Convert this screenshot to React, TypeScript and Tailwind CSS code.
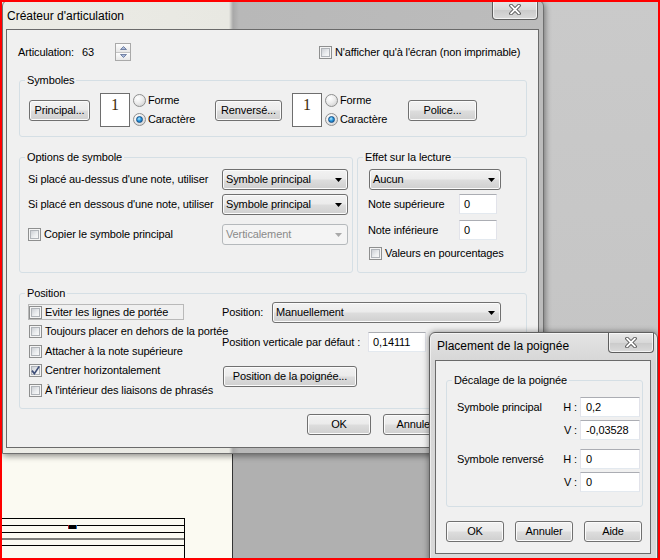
import React from "react";

type C = { className?: string; children?: React.ReactNode };

const BTN =
  "flex flex-none items-center justify-center rounded-[3px] border border-[#707070] bg-[linear-gradient(to_bottom,#f2f2f2_0%,#ebebeb_48%,#dddddd_52%,#cfcfcf_100%)] shadow-[inset_0_0_0_1px_#fbfbfb] whitespace-nowrap";

function Button({ className = "", children }: C) {
  return <div className={`${BTN} ${className}`}>{children}</div>;
}

function Select({ className = "", children, disabled }: C & { disabled?: boolean }) {
  return (
    <div
      className={`flex h-[21px] flex-none items-center rounded-[3px] border pl-[3px] pr-[5px] whitespace-nowrap ${
        disabled
          ? "border-[#b5b9bc] bg-[#f4f4f4] text-[#8a8a8a]"
          : "border-[#707070] bg-[linear-gradient(to_bottom,#f2f2f2_0%,#ebebeb_48%,#dddddd_52%,#cfcfcf_100%)] shadow-[inset_0_0_0_1px_#fbfbfb]"
      } ${className}`}
    >
      <span className="flex-1">{children}</span>
      <svg width="7" height="4" viewBox="0 0 7 4">
        <path d="M0 0H7L3.5 4Z" fill={disabled ? "#a9a9a9" : "#000"} />
      </svg>
    </div>
  );
}

function Input({ className = "", children }: C) {
  return (
    <div
      className={`flex h-[20px] flex-none items-center border border-[#abadb3] border-x-[#e2e3ea] border-b-[#e3e9ef] bg-white pl-[4px] ${className}`}
    >
      {children}
    </div>
  );
}

function CheckBox({ checked }: { checked?: boolean }) {
  return (
    <span className="relative flex h-[13px] w-[13px] flex-none border border-[#8e8f8f] bg-[#f4f4f4] p-[1px]">
      <span className="flex-1 border border-[#b0b4b9] bg-[linear-gradient(135deg,#cdd0d5_0%,#eceef0_60%,#f8f8f8_100%)]" />
      {checked && (
        <svg className="absolute left-[0px] top-[0px]" width="11" height="11" viewBox="0 0 11 11">
          <path d="M2 5.6 L4.4 8.6 L9.2 1.4" fill="none" stroke="#3e4e78" strokeWidth="1.7" />
        </svg>
      )}
    </span>
  );
}

function Check({ checked, children, className = "" }: C & { checked?: boolean }) {
  return (
    <div className={`flex items-center whitespace-nowrap ${className}`}>
      <CheckBox checked={checked} />
      <span className="ml-[3px]">{children}</span>
    </div>
  );
}

function Radio({ checked }: { checked?: boolean }) {
  return (
    <span className="flex h-[13px] w-[13px] flex-none items-center justify-center rounded-full border border-[#8e8f8f] bg-[radial-gradient(circle_at_35%_30%,#ffffff_0%,#ededed_45%,#c8c8c8_100%)]">
      {checked && (
        <span className="h-[7px] w-[7px] rounded-full border border-[#164f86] bg-[radial-gradient(circle_at_40%_35%,#b8ecff_0%,#2c9ae0_45%,#0b5a9e_100%)]" />
      )}
    </span>
  );
}

function RadioPair({ className = "" }: { className?: string }) {
  return (
    <div className={`flex h-[34px] flex-none flex-col justify-center gap-[6px] ${className}`}>
      <div className="flex h-[13px] items-center">
        <Radio />
        <span className="ml-[2px]">Forme</span>
      </div>
      <div className="flex h-[13px] items-center">
        <Radio checked />
        <span className="ml-[2px]">Caractère</span>
      </div>
    </div>
  );
}

function NumBox() {
  return (
    <div className="h-[34px] w-[30px] flex-none border border-[#6e6e6e] bg-white pt-[3px] text-center text-[16px] leading-[16px] text-[#3f2c0c] [font-family:'Liberation_Serif','Times_New_Roman',serif]">
      1
    </div>
  );
}

function Group({ title, className = "", children }: C & { title: string }) {
  return (
    <fieldset className={`flex-none rounded-[3px] border border-[#d5dfe5] ${className}`}>
      <legend className="ml-[5px] px-[2px] leading-[16px]">{title}</legend>
      {children}
    </fieldset>
  );
}

function CloseGlyph() {
  return (
    <svg width="14" height="11" viewBox="0 0 14 11">
      <path d="M3 1.5 L11 9.5 M11 1.5 L3 9.5" stroke="#4a4a4a" strokeWidth="3.6" strokeLinecap="round" />
      <path d="M3 1.5 L11 9.5 M11 1.5 L3 9.5" stroke="#ffffff" strokeWidth="1.8" strokeLinecap="round" />
    </svg>
  );
}

function CloseButton({ className = "" }: { className?: string }) {
  return (
    <div
      className={`flex h-[20px] w-[46px] flex-none items-center justify-center rounded-b-[4px] border border-t-0 border-[#5e5e5e] bg-[linear-gradient(to_bottom,#e9e9e9_0%,#d8d8d8_50%,#cacaca_51%,#dadada_100%)] shadow-[inset_0_0_0_1px_rgba(255,255,255,0.7)] ${className}`}
    >
      <CloseGlyph />
    </div>
  );
}

function MainWindow() {
  return (
    <div className="absolute left-[2px] top-[0px] flex h-[454px] w-[542px] flex-col rounded-t-[6px] border border-[#6f6f6f] bg-[linear-gradient(to_right,#ecece6_0px,#e8e8e2_226px,#a8a8a8_230px,#b8b8b8_236px,#bcbcbc_100%)] shadow-[1px_2px_6px_rgba(0,0,0,0.45)]">
      {/* title bar */}
      <div className="flex h-[28px] flex-none items-start">
        <span className="self-center pl-[4px] pt-[2px] text-[12px] tracking-normal">Créateur d'articulation</span>
        <CloseButton className="ml-auto mr-[5px] -mt-[1px]" />
      </div>
      {/* client */}
      <div className="ml-[3px] flex h-[419px] w-[533px] flex-none flex-col border border-[#6a6a6a] bg-[#f0f0f0]">
        {/* articulation row */}
        <div className="mt-[13px] flex h-[18px] items-center pl-[11px]">
          <span className="w-[64px] flex-none">Articulation:</span>
          <span className="w-[33px] flex-none">63</span>
          <div className="flex h-[18px] w-[16px] flex-none flex-col border border-[#a9a9a9] bg-white">
            <div className="flex flex-1 items-center justify-center border-b border-[#c4c4c4] bg-[linear-gradient(to_bottom,#fdfdfd,#e8e8e8)]">
              <svg width="7" height="4" viewBox="0 0 7 4">
                <path d="M0.5 3.5 L3.5 0.5 L6.5 3.5Z" fill="#a8b8d8" stroke="#5d6f96" strokeWidth="0.8" />
              </svg>
            </div>
            <div className="flex flex-1 items-center justify-center bg-[linear-gradient(to_bottom,#fdfdfd,#e8e8e8)]">
              <svg width="7" height="4" viewBox="0 0 7 4">
                <path d="M0.5 0.5 L3.5 3.5 L6.5 0.5Z" fill="#a8b8d8" stroke="#5d6f96" strokeWidth="0.8" />
              </svg>
            </div>
          </div>
          <Check className="ml-[188px]">N'afficher qu'à l'écran (non imprimable)</Check>
        </div>

        {/* Symboles */}
        <Group title="Symboles" className="ml-[12px] mt-[11px] w-[508px] pb-[9px] pt-[5px]">
          <div className="flex h-[34px] items-center">
            <Button className="ml-[9px] h-[21px] w-[61px]">Principal...</Button>
            <div className="ml-[10px]">
              <NumBox />
            </div>
            <RadioPair className="ml-[3px] w-[82px]" />
            <Button className="h-[21px] w-[67px]">Renversé...</Button>
            <div className="ml-[10px]">
              <NumBox />
            </div>
            <RadioPair className="ml-[3px] w-[83px]" />
            <Button className="h-[21px] w-[69px]">Police...</Button>
          </div>
        </Group>

        {/* Options + Effet */}
        <div className="ml-[12px] mt-[12px] flex items-stretch">
          <Group title="Options de symbole" className="w-[334px] pb-[27px] pt-[4px]">
            <div className="flex h-[21px] items-center">
              <span className="w-[202px] flex-none pl-[8px] whitespace-nowrap">Si placé au-dessus d'une note, utiliser</span>
              <Select className="w-[126px]">Symbole principal</Select>
            </div>
            <div className="mt-[4px] flex h-[21px] items-center">
              <span className="w-[202px] flex-none pl-[8px] whitespace-nowrap">Si placé en dessous d'une note, utiliser</span>
              <Select className="w-[126px]">Symbole principal</Select>
            </div>
            <div className="mt-[9px] flex h-[21px] items-center">
              <div className="w-[202px] flex-none pl-[8px]">
                <Check>Copier le symbole principal</Check>
              </div>
              <Select disabled className="w-[126px]">
                Verticalement
              </Select>
            </div>
          </Group>
          <Group title="Effet sur la lecture" className="ml-[4px] w-[170px] pt-[4px]">
            <Select className="ml-[11px] w-[132px]">Aucun</Select>
            <div className="mt-[4px] flex items-center">
              <span className="w-[101px] flex-none pl-[10px]">Note supérieure</span>
              <Input className="w-[38px]">0</Input>
            </div>
            <div className="mt-[6px] flex items-center">
              <span className="w-[101px] flex-none pl-[10px]">Note inférieure</span>
              <Input className="w-[38px]">0</Input>
            </div>
            <Check className="ml-[11px] mt-[7px] h-[13px]">Valeurs en pourcentages</Check>
          </Group>
        </div>

        {/* Position */}
        <Group title="Position" className="ml-[12px] mt-[12px] w-[508px] pb-[10px]">
          <div className="flex">
            <div className="flex w-[202px] flex-none flex-col gap-[3.5px] pl-[8px] pt-[3px]">
              <div className="flex h-[16px] w-[156px] items-center border border-[#b9b9b9]">
                <Check>Eviter les lignes de portée</Check>
              </div>
              <div className="flex h-[16px] items-center border border-transparent">
                <Check>Toujours placer en dehors de la portée</Check>
              </div>
              <div className="flex h-[16px] items-center border border-transparent">
                <Check>Attacher à la note supérieure</Check>
              </div>
              <div className="flex h-[16px] items-center border border-transparent">
                <Check checked>Centrer horizontalement</Check>
              </div>
              <div className="flex h-[16px] items-center border border-transparent">
                <Check>À l'intérieur des liaisons de phrasés</Check>
              </div>
            </div>
            <div className="flex flex-col pt-[1px]">
              <div className="flex h-[21px] items-center">
                <span className="w-[50px] flex-none">Position:</span>
                <Select className="w-[229px]">Manuellement</Select>
              </div>
              <div className="mt-[9px] flex h-[20px] items-center">
                <span className="w-[146px] flex-none whitespace-nowrap">Position verticale par défaut :</span>
                <Input className="w-[58px]">0,14111</Input>
              </div>
              <Button className="ml-[1px] mt-[14px] h-[21px] w-[134px]">Position de la poignée...</Button>
            </div>
          </div>
        </Group>

        {/* footer buttons */}
        <div className="mt-[5px] flex">
          <Button className="ml-[300px] h-[21px] w-[64px]">OK</Button>
          <Button className="ml-[12px] h-[21px] w-[64px]">Annuler</Button>
        </div>
      </div>
    </div>
  );
}

function HandleWindow() {
  return (
    <div className="absolute left-[429px] top-[332px] flex h-[230px] w-[229px] flex-col rounded-t-[6px] border border-[#5f5f5f] bg-[linear-gradient(to_bottom,#e4e4e4_0%,#d6d6d6_30px,#d8d8d8_100%)] shadow-[0_0_6px_rgba(0,0,0,0.45),inset_0_0_0_1px_rgba(255,255,255,0.55)]">
      <div className="flex h-[27px] flex-none items-start">
        <span className="self-center pl-[7px] text-[12px] tracking-normal">Placement de la poignée</span>
        <CloseButton className="ml-auto mr-[3px]" />
      </div>
      <div className="ml-[5px] flex h-[194px] w-[216px] flex-none flex-col border border-[#6a6a6a] bg-[#f0f0f0]">
        <Group title="Décalage de la poignée" className="ml-[10px] mt-[11px] w-[197px] pb-[14px] pt-[9px]">
          <div className="flex items-center">
            <span className="w-[107px] flex-none pl-[10px] whitespace-nowrap">Symbole principal</span>
            <span className="w-[26px] flex-none pr-[3px] text-right">H :</span>
            <Input className="w-[60px] pl-[5px]">0,2</Input>
          </div>
          <div className="mt-[3px] flex items-center">
            <span className="w-[107px] flex-none" />
            <span className="w-[26px] flex-none pr-[3px] text-right">V :</span>
            <Input className="w-[60px] pl-[5px]">-0,03528</Input>
          </div>
          <div className="mt-[9px] flex items-center">
            <span className="w-[107px] flex-none pl-[10px] whitespace-nowrap">Symbole renversé</span>
            <span className="w-[26px] flex-none pr-[3px] text-right">H :</span>
            <Input className="w-[60px] pl-[5px]">0</Input>
          </div>
          <div className="mt-[3px] flex items-center">
            <span className="w-[107px] flex-none" />
            <span className="w-[26px] flex-none pr-[3px] text-right">V :</span>
            <Input className="w-[60px] pl-[5px]">0</Input>
          </div>
        </Group>
        <div className="mt-[14px] flex">
          <Button className="ml-[10px] h-[21px] w-[58px]">OK</Button>
          <Button className="ml-[11px] h-[21px] w-[58px]">Annuler</Button>
          <Button className="ml-[11px] h-[21px] w-[58px]">Aide</Button>
        </div>
      </div>
    </div>
  );
}

export default function App() {
  return (
    <div className="relative flex h-[560px] w-[660px] overflow-hidden bg-[#c4c4c4] text-[11px] leading-[13px] tracking-[-0.12px] text-black [font-family:'Segoe_UI','Liberation_Sans',Arial,sans-serif]">
      {/* desktop backdrop */}
      <div className="flex w-[232px] flex-none flex-col bg-[#fbfaf2]">
        <svg className="mt-[518px]" width="232" height="42" viewBox="0 0 232 42">
          <g stroke="#000" strokeWidth="1">
            <line x1="0" y1="0.5" x2="185" y2="0.5" />
            <line x1="0" y1="7.5" x2="185" y2="7.5" />
            <line x1="0" y1="14.5" x2="185" y2="14.5" />
            <line x1="0" y1="21" x2="185" y2="21" />
            <line x1="0" y1="27.5" x2="185" y2="27.5" />
            <line x1="184.5" y1="0" x2="184.5" y2="42" />
          </g>
          <rect x="68" y="7" width="9" height="4" fill="#000" />
          <rect x="68" y="7" width="1" height="4" fill="#b02020" />
          <rect x="76" y="7" width="1" height="4" fill="#2070c0" />
        </svg>
      </div>
      <div className="w-[1px] flex-none bg-[#333333]" />
      <div className="w-[310px] flex-none bg-[#b0b0b0]" />
      <div className="flex-1 bg-[linear-gradient(to_bottom,#cacaca,#c2c2c2)]" />

      <MainWindow />
      <HandleWindow />

      {/* red frame of the screenshot */}
      <div className="pointer-events-none absolute inset-0 border-2 border-[#ff0000]" />
    </div>
  );
}
